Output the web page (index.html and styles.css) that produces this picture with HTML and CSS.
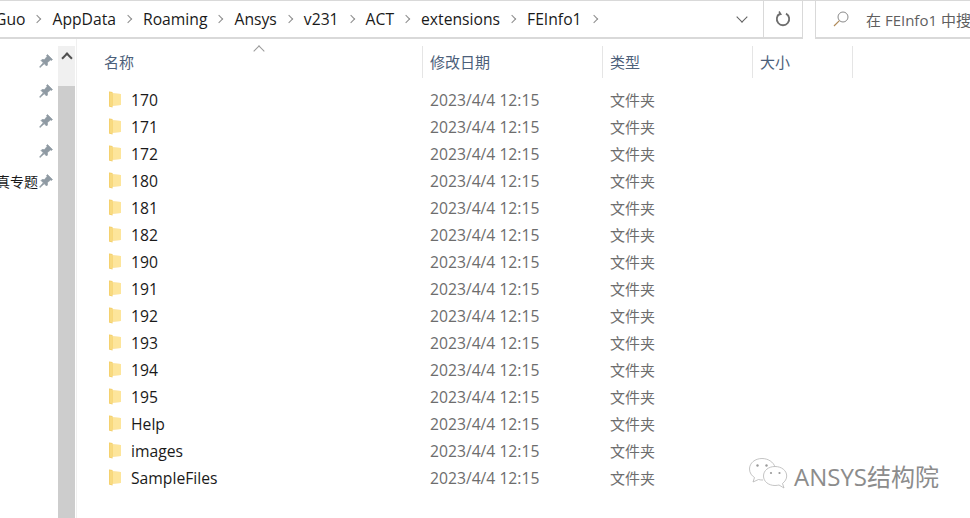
FILE: index.html
```html
<!DOCTYPE html>
<html lang="zh-CN">
<head>
    <meta charset="UTF-8">
    <title>FEInfo1</title>
    <link rel="stylesheet" href="styles.css">
</head>
<body>

<svg class="defs" width="0" height="0">
    <symbol id="folder" viewBox="0 0 13 17">
        <path d="M0.5 0.5 L4 1 L4 2.5 L12.5 3 L12.5 14 L4 14.5 L4 16.5 L0.5 15.5 Z" fill="#f2c95c"/>
        <path d="M4 2.5 L12.5 3 L12.5 14 L4 14.5 Z" fill="#fde59b"/>
        <path d="M1 1.2 L3.6 1.6 L3.6 15.8 L1 15 Z" fill="#f8da80"/>
    </symbol>
    <symbol id="pin" viewBox="0 0 14 14">
        <path d="M8.5 0.5 L13.5 5.5 L12.5 6.5 L11.5 6 L8.5 8.5 L8.5 11 L7.5 12 L2 6.5 L3 5.5 L5.5 5.5 L8 2.5 L7.5 1.5 Z M4 9 L5 10 L1 13.5 L0.5 13 Z" fill="#8f9aa3" stroke="#8f9aa3" stroke-width="0.6"/>
    </symbol>
</svg>

<div class="toolbar">
    <div class="address">
        <div class="crumbs">
            <span>Guo</span><i class="sep"></i>
            <span>AppData</span><i class="sep"></i>
            <span>Roaming</span><i class="sep"></i>
            <span>Ansys</span><i class="sep"></i>
            <span>v231</span><i class="sep"></i>
            <span>ACT</span><i class="sep"></i>
            <span>extensions</span><i class="sep"></i>
            <span>FEInfo1</span><i class="sep"></i>
        </div>
        <div class="dropdown"><i class="chev"></i></div>
        <div class="refresh">
            <svg width="16" height="16" viewBox="0 0 16 16">
                <path d="M5 2.6 A6.2 6.2 0 1 0 11 2.6" fill="none" stroke="#6d6d6d" stroke-width="1.8"/>
                <path d="M4 0.5 L5.8 3.2 L2.8 4" fill="none" stroke="#6d6d6d" stroke-width="1.5"/>
            </svg>
        </div>
    </div>
    <div class="search">
        <svg class="search-icon" width="16" height="16" viewBox="0 0 16 16">
            <circle cx="10" cy="6" r="5" fill="none" stroke="#8a8a8a" stroke-width="1"/>
            <path d="M6.4 9.6 L1 15" stroke="#b08a5a" stroke-width="1.2"/>
        </svg>
        <span>在 FEInfo1 中搜索</span>
    </div>
</div>

<div class="body">
    <div class="quick">
        <div class="quick-row"><svg class="pin"><use href="#pin"/></svg></div>
        <div class="quick-row"><svg class="pin"><use href="#pin"/></svg></div>
        <div class="quick-row"><svg class="pin"><use href="#pin"/></svg></div>
        <div class="quick-row"><svg class="pin"><use href="#pin"/></svg></div>
        <div class="quick-row"><span class="quick-name">仿真专题</span><svg class="pin"><use href="#pin"/></svg></div>
    </div>
    <div class="scrollbar">
        <div class="scroll-up"><i class="chev-up"></i></div>
        <div class="scroll-thumb"></div>
    </div>
    <div class="files">
        <div class="head">
            <div class="col col-name">名称<i class="sort"></i></div>
            <div class="col col-date">修改日期</div>
            <div class="col col-type">类型</div>
            <div class="col col-size">大小</div>
        </div>
        <div id="rows" class="rows"></div>
    </div>
</div>

<div class="watermark">
    <svg width="40" height="36" viewBox="0 0 40 36">
        <path d="M14 1.5 C7 1.5 1.5 6 1.5 12 C1.5 16 4 19 6.5 20.5 L5 25 L10.5 22.5 C12 23 13.5 23 15 23" fill="rgba(255,255,255,.7)" stroke="#b5b5b5" stroke-width="0.8"/>
        <path d="M14 1.5 C20 1.5 25.5 5 27 10" fill="none" stroke="#b5b5b5" stroke-width="0.8"/>
        <path d="M27 9.5 C20.5 9.5 15.5 13.5 15.5 19 C15.5 24.5 20.5 28.5 27 28.5 C28.5 28.5 30 28.2 31 28 L36 31 L34.5 26.5 C37 24.5 38.7 22 38.7 19 C38.7 13.5 33.5 9.5 27 9.5 Z" fill="rgba(255,255,255,.7)" stroke="#b5b5b5" stroke-width="0.8"/>
        <circle cx="9.5" cy="8.5" r="1.2" fill="#9a9a9a"/>
        <circle cx="18.5" cy="8.5" r="1.2" fill="#9a9a9a"/>
        <circle cx="23" cy="16" r="1.1" fill="#9a9a9a"/>
        <circle cx="31.5" cy="16" r="1.1" fill="#9a9a9a"/>
    </svg>
    <span>ANSYS结构院</span>
</div>

<script>
    // folder names, every row has the same date and type
    let names = ["170", "171", "172", "180", "181", "182", "190", "191", "192", "193", "194", "195", "Help", "images", "SampleFiles"];
    let rows = document.getElementById("rows");

    names.forEach(function (name) {
        let row = document.createElement("div");
        row.className = "row";
        row.innerHTML = `
            <div class="cell-name"><svg class="folder"><use href="#folder"/></svg><span>${name}</span></div>
            <div class="cell-date">2023/4/4 12:15</div>
            <div class="cell-type">文件夹</div>`;
        rows.appendChild(row);
    });
</script>

</body>
</html>
```

FILE: styles.css
```css
* {
    box-sizing: border-box;
}
html, body {
    margin: 0;
    height: 100%;
    overflow: hidden;
}
body {
    position: relative;
    background-color: #fff;
    font-family: "Open Sans", "Noto Sans CJK SC", sans-serif;
    font-size: 15.7px;
}
.defs {
    position: absolute;
}
.toolbar {
    display: flex;
    height: 39px;
    border-top: 1px solid #d9d9d9;
}
.address {
    display: flex;
    width: 803px;
    border-right: 1px solid #d9d9d9;
    border-bottom: 2px solid #d9d9d9;
}
.crumbs {
    flex: 1;
    display: flex;
    align-items: center;
    gap: 12px;
    margin-left: -5px;
    color: #1a1a1a;
    white-space: nowrap;
    overflow: hidden;
}
.sep {
    width: 6px;
    height: 6px;
    margin-left: -3px;
    border-top: 1.5px solid #8c8c8c;
    border-right: 1.5px solid #8c8c8c;
    transform: rotate(45deg);
}
.dropdown {
    width: 42px;
    display: flex;
    justify-content: center;
    align-items: center;
}
.chev {
    width: 8px;
    height: 8px;
    margin-top: -4px;
    border-right: 1.5px solid #606060;
    border-bottom: 1.5px solid #606060;
    transform: rotate(45deg);
}
.refresh {
    width: 39px;
    display: flex;
    justify-content: center;
    align-items: center;
    border-left: 1px solid #d9d9d9;
}
.search {
    display: flex;
    align-items: center;
    gap: 17px;
    flex: 1;
    margin-left: 12px;
    padding-left: 17px;
    border-left: 1px solid #d9d9d9;
    border-bottom: 2px solid #d9d9d9;
    font-size: 15px;
    color: #5f5f5f;
    white-space: nowrap;
    overflow: hidden;
}
.search-icon {
    flex: none;
}
.body {
    display: flex;
    height: 479px;
}
.quick {
    width: 58px;
    padding-top: 7px;
    overflow: hidden;
}
.quick-row {
    display: flex;
    justify-content: flex-end;
    align-items: center;
    height: 30px;
    padding-right: 5px;
    white-space: nowrap;
}
.quick-name {
    margin-right: 1px;
    font-size: 14px;
    color: #1a1a1a;
}
.pin {
    flex: none;
    width: 14px;
    height: 14px;
}
.scrollbar {
    width: 19px;
    padding-top: 7px;
    padding-right: 1px;
    border-right: 1px solid #f0f0f0;
    display: flex;
    flex-direction: column;
}
.scroll-up {
    height: 40px;
    background-color: #f0f0f0;
    display: flex;
    justify-content: center;
    padding-top: 8px;
}
.chev-up {
    width: 8px;
    height: 8px;
    border-top: 2px solid #505050;
    border-left: 2px solid #505050;
    transform: rotate(45deg);
}
.scroll-thumb {
    flex: 1;
    background-color: #cdcdcd;
}
.files {
    flex: 1;
    padding-top: 7px;
    color: #1a1a1a;
}
.head {
    display: flex;
    height: 32px;
    color: #4c607a;
    font-size: 15px;
}
.col {
    position: relative;
    display: flex;
    align-items: center;
    padding-left: 7px;
    padding-bottom: 2px;
    border-right: 1px solid #e5e5e5;
}
.col-name {
    width: 346px;
    padding-left: 27px;
}
.col-date {
    width: 180px;
}
.col-type {
    width: 150px;
}
.col-size {
    width: 100px;
}
.sort {
    position: absolute;
    top: 1px;
    left: 178px;
    width: 8px;
    height: 8px;
    border-top: 1px solid #9a9a9a;
    border-left: 1px solid #9a9a9a;
    transform: rotate(45deg);
}
.rows {
    padding-top: 8px;
}
.row {
    display: flex;
    align-items: center;
    height: 27px;
}
.cell-name {
    display: flex;
    align-items: center;
    gap: 9px;
    width: 346px;
    padding-left: 31px;
}
.folder {
    flex: none;
    width: 14px;
    height: 17px;
    margin-top: -1px;
}
.cell-date {
    width: 180px;
    padding-left: 7px;
    color: #6d6d6d;
}
.cell-type {
    padding-left: 7px;
    color: #6d6d6d;
    font-size: 15px;
}
.watermark {
    position: absolute;
    left: 748px;
    top: 457px;
    display: flex;
    align-items: center;
    gap: 6px;
    font-size: 24px;
    color: #8c8c8c;
    text-shadow: 1px 1px 1px #fff;
}
```
